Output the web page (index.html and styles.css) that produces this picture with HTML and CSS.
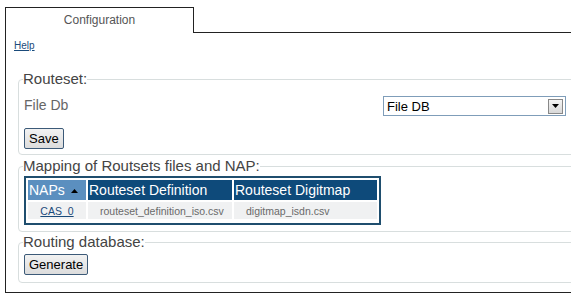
FILE: index.html
```html
<!DOCTYPE html>
<html>
<head>
<meta charset="utf-8">
<link rel="stylesheet" href="styles.css">
</head>
<body>
<div class="page">
  <div class="tabbar">
    <div class="tab">Configuration</div>
    <div class="tabfill"></div>
  </div>
  <div class="panel">
    <a class="help" href="#">Help</a>
    <fieldset class="group g1">
      <legend>Routeset:</legend>
      <div class="row">
        <span class="label">File Db</span>
        <div class="select"><span>File DB</span><span class="arrow"><svg width="7" height="4" viewBox="0 0 7 4"><path d="M0 0H7L3.5 4Z" fill="#000"/></svg></span></div>
      </div>
      <button class="btn">Save</button>
    </fieldset>
    <fieldset class="group g2">
      <legend>Mapping of Routsets files and NAP:</legend>
      <div class="tablewrap">
        <table class="grid">
          <thead>
            <tr>
              <th class="sorted c1">NAPs <svg width="7" height="4" viewBox="0 0 7 4"><path d="M0 4H7L3.5 0Z" fill="#000"/></svg></th>
              <th class="c2">Routeset Definition</th>
              <th class="c3">Routeset Digitmap</th>
            </tr>
          </thead>
          <tbody>
            <tr>
              <td class="center"><a href="#">CAS_0</a></td>
              <td>routeset_definition_iso.csv</td>
              <td>digitmap_isdn.csv</td>
            </tr>
          </tbody>
        </table>
      </div>
    </fieldset>
    <fieldset class="group g3">
      <legend>Routing database:</legend>
      <button class="btn">Generate</button>
    </fieldset>
  </div>
</div>
</body>
</html>
```

FILE: styles.css
```css
html, body {
  margin: 0;
  padding: 0;
  background: #fff;
  overflow: hidden;
  width: 571px;
  height: 305px;
}
.page {
  padding: 7px 0 0 5px;
  font-family: "Liberation Sans", Arial, sans-serif;
}
.tabbar {
  display: flex;
  height: 26px;
}
.tab {
  width: 187px;
  border: 1px solid #222;
  border-bottom: none;
  font-size: 12px;
  color: #555;
  text-align: center;
  line-height: 24px;
}
.tabfill {
  flex: 1;
  border-bottom: 1px solid #222;
}
.panel {
  border-left: 1px solid #222;
  border-bottom: 1px solid #222;
  height: 260px;
  padding: 7px 0 0 8px;
  box-sizing: border-box;
}
.help {
  display: block;
  font-size: 10px;
  color: #1a4a7a;
  text-decoration: underline;
  line-height: 12px;
  width: 30px;
  margin-bottom: 19px;
}
.group {
  margin: 0 -20px 0 4px;
  padding: 0 0 0 5px;
  border: 1px solid #d8dede;
  border-radius: 4px;
  box-sizing: border-box;
}
.group legend {
  font-size: 15px;
  color: #444;
  padding: 0;
  margin-left: -1px;
  line-height: 16px;
}
.g1 {
  height: 84px;
  margin-bottom: 3px;
}
.row {
  display: flex;
  align-items: center;
  justify-content: space-between;
  width: 542px;
  margin-top: 6px;
}
.label {
  font-size: 14px;
  color: #666;
}
.select {
  width: 178px;
  height: 18px;
  border: 1px solid #7f9db9;
  display: flex;
  align-items: center;
  justify-content: space-between;
  font-size: 13px;
  color: #000;
  padding-left: 3px;
  box-sizing: content-box;
  margin-top: 3px;
}
.arrow {
  width: 13px;
  height: 13px;
  border: 1px solid #888;
  background: linear-gradient(#f4f4f4, #d8d8d8);
  display: flex;
  align-items: center;
  justify-content: center;
  margin-right: 2px;
}
.btn {
  font-family: "Liberation Sans", Arial, sans-serif;
  font-size: 13px;
  color: #000;
  background: linear-gradient(#f2f2f2, #dcdcdc);
  border: 1px solid #3c5a78;
  border-radius: 2px;
  padding: 1px 4px;
  height: 21px;
  line-height: 17px;
  display: block;
}
.g1 .btn {
  margin-top: 12px;
}
.g2 {
  height: 74px;
  margin-bottom: 2px;
}
.tablewrap {
  display: inline-block;
  border: 2px solid #1f4e6e;
  margin-top: 2px;
  padding: 0 0 2px 0;
}
.grid {
  border-collapse: separate;
  border-spacing: 2px;
  table-layout: fixed;
  width: 353px;
}
.grid th {
  background: #0e4a7a;
  color: #fff;
  font-weight: normal;
  font-size: 14px;
  text-align: left;
  padding: 0 1px;
  height: 20px;
  white-space: nowrap;
  overflow: hidden;
  box-sizing: border-box;
}
.grid th.sorted {
  background: #5b8fbf;
}
.grid th svg {
  vertical-align: middle;
  margin-left: 2px;
}
.c1 { width: 58px; }
.c2 { width: 144px; }
.c3 { width: 143px; }
.grid td {
  background: #f0f1f2;
  font-size: 10.5px;
  color: #6a6a6a;
  padding: 0 0 0 12px;
  height: 17px;
  white-space: nowrap;
  overflow: hidden;
  box-sizing: border-box;
}
.grid td.center {
  text-align: center;
  padding: 0;
}
.grid td a {
  color: #1a4a7a;
}
.g3 {
  height: 49px;
}
.g3 .btn {
  margin-top: 4px;
}
```
